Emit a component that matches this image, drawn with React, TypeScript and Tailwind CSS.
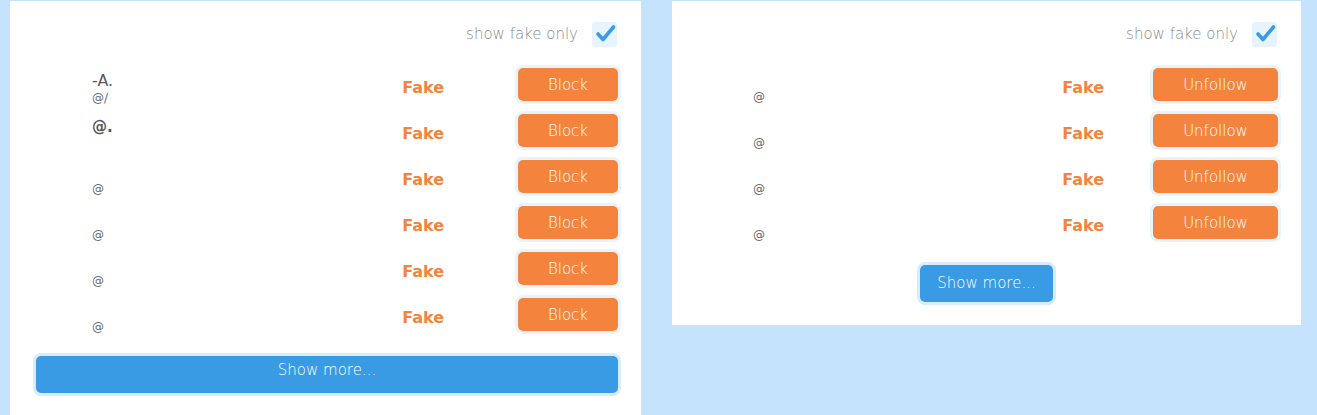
import React from 'react'

const font = { fontFamily: '"DejaVu Sans", "Liberation Sans", sans-serif' }

type Row = { name: string; handle: string }

const leftRows: Row[] = [
  { name: '-A.', handle: '@/' },
  { name: '@.', handle: '' },
  { name: '', handle: '@' },
  { name: '', handle: '@' },
  { name: '', handle: '@' },
  { name: '', handle: '@' },
]

const rightRows: Row[] = [
  { name: '', handle: '@' },
  { name: '', handle: '@' },
  { name: '', handle: '@' },
  { name: '', handle: '@' },
]

function Check() {
  return (
    <div className="flex h-[25px] w-[25px] items-center justify-center rounded-[3px] bg-[#e8f4fd]">
      <svg width="25" height="25" viewBox="0 0 25 25">
        <path d="M6 12 L11 17.5 L21.5 5" fill="none" stroke="#3a9be4" strokeWidth="3.6" strokeLinecap="round" strokeLinejoin="round" />
      </svg>
    </div>
  )
}

function Filter() {
  return (
    <div className="flex items-center justify-end gap-[14px] pr-[4px]">
      <span className="text-[15px] font-light text-[#888b8e]">show fake only</span>
      <Check />
    </div>
  )
}

function Person({ row }: { row: Row }) {
  return (
    <div className="flex h-full flex-1 flex-col pl-[59px] pt-[6px]">
      <div className={`h-[20px] leading-[20px] text-[#555a60] ${row.name.startsWith('@') ? 'text-[15px] font-bold' : 'text-[16px]'}`}>
        {row.name}
      </div>
      <div className="h-[14px] text-[12px] leading-[14px] text-[#666b70]">{row.handle}</div>
    </div>
  )
}

function ActionButton({ label, width }: { label: string; width: string }) {
  return (
    <div className={`${width} h-[39px] rounded-[8px] border-[3px] border-[#e8f4fd]`}>
      <button className="flex h-full w-full items-center justify-center rounded-[5px] bg-[#f4843d] pt-[2px] text-[15px] font-light text-white">
        {label}
      </button>
    </div>
  )
}

export default function App() {
  return (
    <div style={font} className="flex h-[415px] items-start gap-[31px] overflow-hidden bg-[#c5e3fc] pl-[10px] pt-px">
      {/* Blocks */}
      <div className="h-[414px] w-[631px] bg-white pl-[23px] pr-[20px] pt-[21px]">
        <Filter />
        <div className="mt-[18px] flex flex-col gap-[7px]">
          {leftRows.map((row, i) => (
            <div key={i} className="flex h-[39px] items-center">
              <Person row={row} />
              <span className="mr-[71px] pt-[6px] text-[16px] font-bold text-[#f4843d]">Fake</span>
              <ActionButton label="Block" width="w-[106px]" />
            </div>
          ))}
        </div>
        <div className="mt-[19px] h-[43px] rounded-[8px] border-[3px] border-[#d8ecfb]">
          <button className="flex h-full w-full items-start justify-center rounded-[5px] bg-[#389be3] pt-[3px] text-[15px] font-light text-white">
            Show more...
          </button>
        </div>
      </div>

      {/* Unfollows */}
      <div className="h-[324px] w-[629px] bg-white pl-[22px] pr-[20px] pt-[21px]">
        <Filter />
        <div className="mt-[18px] flex flex-col gap-[7px]">
          {rightRows.map((row, i) => (
            <div key={i} className="flex h-[39px] items-center">
              <Person row={row} />
              <span className="mr-[46px] pt-[6px] text-[16px] font-bold text-[#f4843d]">Fake</span>
              <ActionButton label="Unfollow" width="w-[131px]" />
            </div>
          ))}
        </div>
        <div className="mt-[20px] flex justify-center pr-[2px]">
          <div className="h-[43px] w-[139px] rounded-[8px] border-[3px] border-[#d8ecfb]">
            <button className="flex h-full w-full items-center justify-center rounded-[5px] bg-[#389be3] text-[15px] font-light text-white">
              Show more...
            </button>
          </div>
        </div>
      </div>
    </div>
  )
}
